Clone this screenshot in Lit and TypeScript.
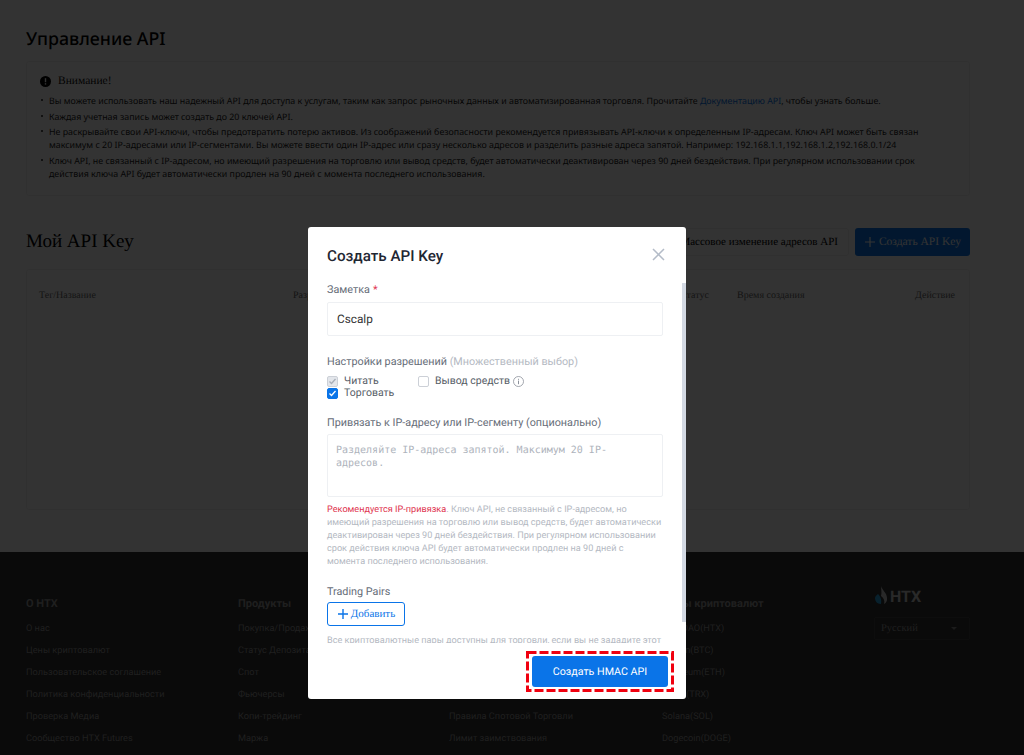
import { LitElement, html, css } from "lit";
import { customElement } from "lit/decorators.js";

const footer: { x: string; head?: string; rows: string[] }[] = [
  { x: "c1", head: "О HTX", rows: ["О нас", "Цены криптовалют", "Пользовательское соглашение", "Политика конфиденциальности", "Проверка Медиа", "Сообщество HTX Futures"] },
  { x: "c2", head: "Продукты", rows: ["Покупка/Продажа криптовалюты", "Статус Депозита и Вывода", "Спот", "Фьючерсы", "Копи-трейдинг", "Маржа"] },
  { x: "c3", rows: ["Правила Спотовой Торговли", "Лимит заимствования"] },
  { x: "c4", head: "Цены криптовалют", rows: ["HTX DAO(HTX)", "Bitcoin(BTC)", "Ethereum(ETH)", "TRON(TRX)", "Solana(SOL)", "Dogecoin(DOGE)"] },
];

@customElement("app-root")
export class AppRoot extends LitElement {
  static styles = css`
    :host { display: block; height: 755px; overflow: hidden; position: relative; background: #fff; font-family: "Roboto", sans-serif; text-rendering: geometricPrecision; }
    * { box-sizing: border-box; }
    .main { height: 552px; background: #fff; padding: 26px 54px 0 26px; }
    h1 { margin: 0; font-family: "Noto Sans", sans-serif; font-size: 17.8px; line-height: 26px; font-weight: 500; color: #000; }
    .notice { margin-top: 9px; height: 135px; border: 1px solid #f0f0f0; border-radius: 3px; padding: 12px 13px 0; font-family: "Noto Sans", sans-serif; }
    .nhead { display: flex; align-items: center; gap: 7px; height: 14px; font-family: "Liberation Serif", serif; font-size: 11.5px; color: #111; }
    ul { list-style: none; margin: 7px 0 0; padding: 0; }
    li { position: relative; padding-left: 9px; font-size: 8.85px; line-height: 13px; color: #222; margin-bottom: 2.5px; }
    li::before { content: ""; position: absolute; left: 1px; top: 4px; width: 2px; height: 2px; background: #222; border-radius: 50%; }
    li a { color: #0a74e8; }
    .bar { display: flex; align-items: center; justify-content: space-between; margin-top: 30px; height: 32px; }
    h2 { margin: 0; font-family: "Liberation Serif", serif; font-size: 19px; font-weight: 400; color: #000; }
    .btns { display: flex; gap: 6px; font-family: "Liberation Serif", serif; font-size: 11.5px; }
    .btn { height: 28px; display: flex; align-items: center; border-radius: 3px; padding: 0 10px; }
    .ghost { border: 1px solid #eee; color: #000; font-size: 11px; }
    .prim { background: #0a74e8; color: #fff; gap: 3px; width: 115px; justify-content: center; padding: 0; }
    .table { margin-top: 11px; height: 241px; border: 1px solid #f0f0f0; border-radius: 3px; font-family: "Liberation Serif", serif; font-size: 10px; color: #666; display: grid; grid-template-columns: 254px 387px 57px 178px auto; padding: 20px 12px 0; align-content: start; }
    .footer { height: 203px; background: #323232; display: grid; grid-template-columns: 212px 211px 213px 212px 150px; padding: 45px 0 0 26px; }
    .fh { font-size: 11px; font-weight: 700; line-height: 14px; height: 25px; color: #999; white-space: nowrap; }
    .fr { font-size: 9.2px; line-height: 14px; height: 22px; color: #999; white-space: nowrap; }
    .c3 { padding-top: 113px; }
    .brand { margin-top: -11px; }
    .logo { display: flex; align-items: center; gap: 2px; height: 20px; font-size: 16px; font-weight: 700; color: #ccc; }
    .lang { margin-top: 11px; width: 96px; height: 23px; border: 1px solid #444; border-radius: 2px; display: flex; align-items: center; justify-content: space-between; padding: 0 12px 0 6px; font-family: "Liberation Serif", serif; font-size: 10.5px; color: #999; }
    .caret { width: 0; height: 0; border: 3px solid transparent; border-top: 3px solid #888; margin-top: 3px; }
    .overlay { position: absolute; inset: 0; background: rgba(0, 0, 0, 0.8); }
    .modal { position: absolute; left: 308px; top: 227px; width: 378px; height: 472px; background: #fff; border-radius: 3px; overflow: hidden; display: flex; flex-direction: column; }
    .mhead { flex: none; height: 55px; padding: 18px 21px 0 19px; display: flex; justify-content: space-between; align-items: flex-start; }
    .mtitle { font-size: 15.2px; font-weight: 500; line-height: 22px; color: #1f2733; }
    .close { margin-top: 3px; }
    .body { flex: 1; overflow: hidden; padding: 0 23px 0 19px; }
    .lbl { font-size: 10.8px; line-height: 16px; color: #666d78; }
    .star { color: #e0344f; margin-left: 3px; }
    .inp { margin-top: 4px; height: 34px; border: 1px solid #eef0f3; border-radius: 2px; padding: 0 9px; display: flex; align-items: center; font-size: 11.8px; color: #333; }
    .mut { color: #b4b9c2; }
    .perm { margin-top: 18px; }
    .checks { display: grid; grid-template-columns: 91px auto; grid-auto-rows: 12px; margin-top: 5px; font-size: 10.5px; color: #555c66; }
    .ck { display: flex; align-items: center; gap: 6px; line-height: 12px; white-space: nowrap; }
    .box { flex: none; width: 11px; height: 11px; border: 1px solid #ccd0d7; border-radius: 2px; display: flex; align-items: center; justify-content: center; }
    .box.dis { background: #e3e6eb; }
    .box.on { background: #0a74e8; border-color: #0a74e8; }
    .info { margin-left: -3px; }
    .ipl { margin-top: 16px; }
    .ta { margin-top: 3px; height: 63px; border: 1px solid #eef0f3; border-radius: 2px; padding: 9px 8px; font-family: "DejaVu Sans Mono", monospace; font-size: 10px; line-height: 13px; color: #aeb3bc; }
    .hint { margin: 7px 0 0; font-size: 9.15px; line-height: 13px; color: #b4b9c2; }
    .hint b { font-weight: 400; color: #e0344f; }
    .tp { margin-top: 15px; }
    .add { margin-top: 2px; width: 78px; height: 24px; border: 1px solid #0a74e8; border-radius: 3px; display: flex; align-items: center; justify-content: center; gap: 2px; font-family: "Liberation Serif", serif; font-size: 11px; color: #0a74e8; }
    .note { margin: 9px 0 0; font-size: 9.15px; line-height: 13px; color: #b4b9c2; }
    .thumb { position: absolute; right: 0; top: 56px; width: 4px; height: 339px; background: #d3d9e3; }
    .mfoot { flex: none; height: 56px; padding: 8px 12px 0 0; display: flex; justify-content: flex-end; }
    .dash { position: relative; width: 148px; height: 41px; padding: 5px 6px; }
    .dash svg { position: absolute; inset: 0; }
    .cta { height: 31px; background: #0a74e8; border-radius: 3px; color: #fff; font-size: 10.7px; display: flex; align-items: center; justify-content: center; }
  `;

  render() {
    return html`
      <div class="main">
        <h1>Управление API</h1>
        <div class="notice">
          <div class="nhead">
            <svg width="11" height="11" viewBox="0 0 11 11"><circle cx="5.5" cy="5.5" r="5.5" fill="#000"/><rect x="4.8" y="2.2" width="1.4" height="4" fill="#fff"/><rect x="4.8" y="7.2" width="1.4" height="1.4" fill="#fff"/></svg>
            <span>Внимание!</span>
          </div>
          <ul>
            <li>Вы можете использовать наш надежный API для доступа к услугам, таким как запрос рыночных данных и автоматизированная торговля. Прочитайте <a>Документацию API</a>, чтобы узнать больше.</li>
            <li>Каждая учетная запись может создать до 20 ключей API.</li>
            <li>Не раскрывайте свои API-ключи, чтобы предотвратить потерю активов. Из соображений безопасности рекомендуется привязывать API-ключи к определенным IP-адресам. Ключ API может быть связан максимум с 20 IP-адресами или IP-сегментами. Вы можете ввести один IP-адрес или сразу несколько адресов и разделить разные адреса запятой. Например: 192.168.1.1,192.168.1.2,192.168.0.1/24</li>
            <li>Ключ API, не связанный с IP-адресом, но имеющий разрешения на торговлю или вывод средств, будет автоматически деактивирован через 90 дней бездействия. При регулярном использовании срок действия ключа API будет автоматически продлен на 90 дней с момента последнего использования.</li>
          </ul>
        </div>
        <div class="bar">
          <h2>Мой API Key</h2>
          <div class="btns">
            <div class="btn ghost">Массовое изменение адресов API</div>
            <div class="btn prim">
              <svg width="12" height="12" viewBox="0 0 12 12"><path d="M6 1v10M1 6h10" stroke="#fff" stroke-width="1.2"/></svg>
              Создать API Key
            </div>
          </div>
        </div>
        <div class="table">
          <span>Тег/Название</span><span>Разрешения</span><span>Статус</span><span>Время создания</span><span>Действие</span>
        </div>
      </div>
      <div class="footer">
        ${footer.map((c) => html`
          <div class=${c.x}>
            ${c.head ? html`<div class="fh">${c.head}</div>` : ""}
            ${c.rows.map((r) => html`<div class="fr">${r}</div>`)}
          </div>`)}
        <div class="brand">
          <div class="logo">
            <svg width="14" height="20" viewBox="0 0 14 20"><path d="M7 0c1 4 6 7 6 12a6 6 0 0 1-3 6c1-3 0-6-3-8C8 6 7 3 7 0z" fill="#ccc"/><path d="M4 8c2 2 4 5 3 10-4 0-6-3-6-6 0-2 2-3 3-4z" fill="#2ca6e0"/></svg>
            <span>HTX</span>
          </div>
          <div class="lang"><span>Русский</span><i class="caret"></i></div>
        </div>
      </div>
      <div class="overlay"></div>
      <div class="modal">
        <div class="mhead">
          <div class="mtitle">Создать API Key</div>
          <svg class="close" width="13" height="13" viewBox="0 0 13 13"><path d="M1 1l11 11M12 1L1 12" stroke="#b4bcc8" stroke-width="1.5"/></svg>
        </div>
        <div class="body">
          <div class="lbl">Заметка<span class="star">*</span></div>
          <div class="inp">Cscalp</div>
          <div class="lbl perm">Настройки разрешений <span class="mut">(Множественный выбор)</span></div>
          <div class="checks">
            <div class="ck"><span class="box dis"><svg width="9" height="9" viewBox="0 0 9 9"><path d="M1.5 4.5l2 2 4-4.5" fill="none" stroke="#a8aeb8" stroke-width="1.3"/></svg></span>Читать</div>
            <div class="ck"><span class="box"></span>Вывод средств<svg class="info" width="11" height="11" viewBox="0 0 11 11"><circle cx="5.5" cy="5.5" r="5" fill="none" stroke="#8b919b" stroke-width=".8"/><path d="M5.5 4.6v3.6M5.5 2.8v1" stroke="#8b919b"/></svg></div>
            <div class="ck"><span class="box on"><svg width="9" height="9" viewBox="0 0 9 9"><path d="M1.5 4.5l2 2 4-4.5" fill="none" stroke="#fff" stroke-width="1.3"/></svg></span>Торговать</div>
          </div>
          <div class="lbl ipl">Привязать к IP-адресу или IP-сегменту (опционально)</div>
          <div class="ta">Разделяйте IP-адреса запятой. Максимум 20 IP-адресов.</div>
          <p class="hint"><b>Рекомендуется IP-привязка</b>. Ключ API, не связанный с IP-адресом, но имеющий разрешения на торговлю или вывод средств, будет автоматически деактивирован через 90 дней бездействия. При регулярном использовании срок действия ключа API будет автоматически продлен на 90 дней с момента последнего использования.</p>
          <div class="lbl tp">Trading Pairs</div>
          <div class="add"><svg width="12" height="12" viewBox="0 0 12 12"><path d="M6 1v10M1 6h10" stroke="#0a74e8" stroke-width="1.4"/></svg>Добавить</div>
          <p class="note">Все криптовалютные пары доступны для торговли, если вы не зададите этот параметр.</p>
        </div>
        <div class="thumb"></div>
        <div class="mfoot"><div class="dash">
          <svg width="148" height="41" viewBox="0 0 148 41"><rect x="1.5" y="1.5" width="145" height="38" fill="none" stroke="#f0000f" stroke-width="3" stroke-dasharray="9 3"/></svg>
          <div class="cta">Создать HMAC API</div>
        </div></div>
      </div>
    `;
  }
}
